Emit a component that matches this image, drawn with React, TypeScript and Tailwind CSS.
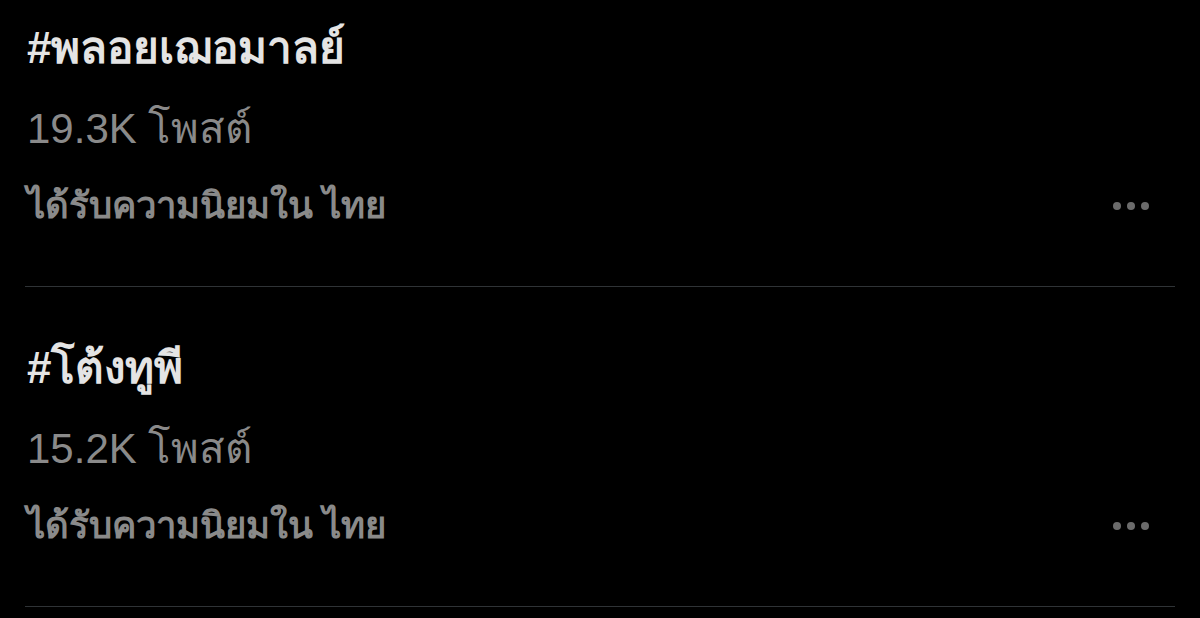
import React from 'react';

interface Trend {
  tag: string;
  posts: string;
  context: string;
}

const trends: Trend[] = [
  { tag: '#พลอยเฌอมาลย์', posts: '19.3K โพสต์', context: 'ได้รับความนิยมใน ไทย' },
  { tag: '#โต้งทูพี', posts: '15.2K โพสต์', context: 'ได้รับความนิยมใน ไทย' },
];

const font = { fontFamily: '"Liberation Sans", "Noto Sans", sans-serif' };

const MoreDots: React.FC = () => (
  <div className="flex items-center gap-[6px] pr-[26px]">
    <span className="w-[8px] h-[8px] rounded-full bg-[#6b6b6b]" />
    <span className="w-[8px] h-[8px] rounded-full bg-[#6b6b6b]" />
    <span className="w-[8px] h-[8px] rounded-full bg-[#6b6b6b]" />
  </div>
);

export default function App() {
  return (
    <div className="w-[1200px] h-[618px] bg-black overflow-hidden" style={font}>
      <div className="px-[25px]">
        {trends.map((t) => (
          <div key={t.tag} className="pt-[41px] first:pt-[8px] pb-[42px] border-b border-[#2f3336]">
            <div className="h-[80px] flex items-center pl-[2px] text-[44px] font-bold text-[#e4e4e4]">
              {t.tag}
            </div>
            <div className="h-[80px] flex items-center pl-[2px] text-[42px] text-[#8a8a8a]">
              {t.posts}
            </div>
            <div className="h-[76px] flex items-center justify-between">
              <span className="pl-[2px] text-[36.5px] font-bold text-[#8a8a8a]">{t.context}</span>
              <MoreDots />
            </div>
          </div>
        ))}
      </div>
    </div>
  );
}
